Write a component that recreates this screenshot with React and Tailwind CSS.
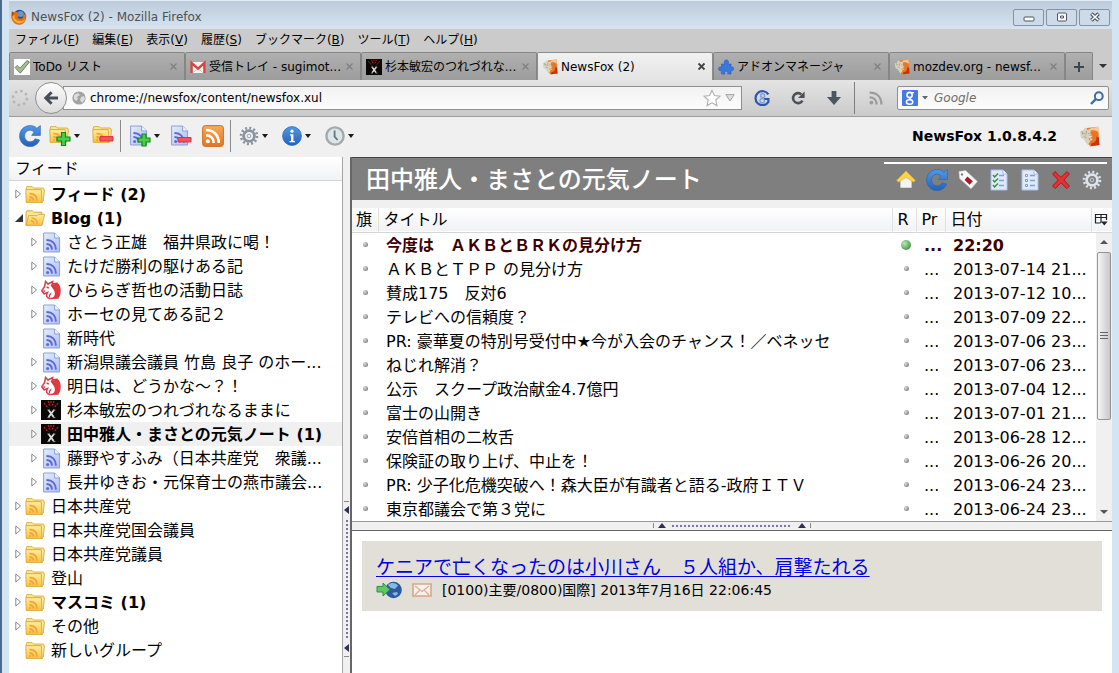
import { useState } from 'react';

const TABS = [
  { id: 'todo', title: 'ToDo リスト', icon: CheckIcon },
  { id: 'mail', title: '受信トレイ - sugimot...', icon: GmailIcon },
  { id: 'blog', title: '杉本敏宏のつれづれな...', icon: XBlogIcon },
  { id: 'newsfox', title: 'NewsFox (2)', icon: NewsFoxIcon },
  { id: 'addons', title: 'アドオンマネージャ', icon: PuzzleIcon },
  { id: 'mozdev', title: 'mozdev.org - newsf...', icon: NewsFoxIcon },
];

const MENUS = [
  ['ファイル', 'F'],
  ['編集', 'E'],
  ['表示', 'V'],
  ['履歴', 'S'],
  ['ブックマーク', 'B'],
  ['ツール', 'T'],
  ['ヘルプ', 'H'],
];

const FEEDS = [
  { name: 'フィード (2)', icon: FolderIcon, twisty: 'closed', bold: true },
  { name: 'Blog (1)', icon: FolderOpenIcon, twisty: 'open', bold: true },
  { name: 'さとう正雄　福井県政に喝！', icon: FeedIcon, twisty: 'closed', child: true },
  { name: 'たけだ勝利の駆けある記', icon: FeedIcon, twisty: 'closed', child: true },
  { name: 'ひららぎ哲也の活動日誌', icon: HorseIcon, twisty: 'closed', child: true },
  { name: 'ホーセの見てある記２', icon: FeedIcon, twisty: 'closed', child: true },
  { name: '新時代', icon: FeedIcon, child: true },
  { name: '新潟県議会議員 竹島 良子 のホー...', icon: FeedIcon, twisty: 'closed', child: true },
  { name: '明日は、どうかな～？！', icon: HorseIcon, twisty: 'closed', child: true },
  { name: '杉本敏宏のつれづれなるままに', icon: XBlogIcon, twisty: 'closed', child: true },
  { name: '田中雅人・まさとの元気ノート (1)', icon: XBlogIcon, twisty: 'closed', child: true, bold: true },
  { name: '藤野やすふみ（日本共産党　衆議...', icon: FeedIcon, twisty: 'closed', child: true },
  { name: '長井ゆきお・元保育士の燕市議会...', icon: FeedIcon, twisty: 'closed', child: true },
  { name: '日本共産党', icon: FolderIcon, twisty: 'closed' },
  { name: '日本共産党国会議員', icon: FolderIcon, twisty: 'closed' },
  { name: '日本共産党議員', icon: FolderIcon, twisty: 'closed' },
  { name: '登山', icon: FolderIcon, twisty: 'closed' },
  { name: 'マスコミ (1)', icon: FolderIcon, twisty: 'closed', bold: true },
  { name: 'その他', icon: FolderIcon, twisty: 'closed' },
  { name: '新しいグループ', icon: FolderIcon },
];

const ARTICLES = [
  { title: '今度は　ＡＫＢとＢＲＫの見分け方', date: '22:20', unread: true },
  { title: 'ＡＫＢとＴＰＰ の見分け方', date: '2013-07-14 21...' },
  { title: '賛成175　反対6', date: '2013-07-12 10...' },
  { title: 'テレビへの信頼度？', date: '2013-07-09 22...' },
  { title: 'PR: 豪華夏の特別号受付中★今が入会のチャンス！／ベネッセ', date: '2013-07-06 23...' },
  { title: 'ねじれ解消？', date: '2013-07-06 23...' },
  { title: '公示　スクープ政治献金4.7億円', date: '2013-07-04 12...' },
  { title: '富士の山開き', date: '2013-07-01 21...' },
  { title: '安倍首相の二枚舌', date: '2013-06-28 12...' },
  { title: '保険証の取り上げ、中止を！', date: '2013-06-26 20...' },
  { title: 'PR: 少子化危機突破へ！森大臣が有識者と語る-政府ＩＴＶ', date: '2013-06-24 23...' },
  { title: '東京都議会で第３党に', date: '2013-06-24 23...' },
];

/* ---------- icons ---------- */

// gradients shared by the icons below
function IconDefs() {
  return (
    <svg className="absolute size-0" aria-hidden="true">
      <defs>
        <linearGradient id="folder" x1="0" y1="0" x2="0" y2="1">
          <stop offset="0" stopColor="#fdeea0" />
          <stop offset="1" stopColor="#f9c23c" />
        </linearGradient>
        <linearGradient id="page" x1="0" y1="0" x2="1" y2="1">
          <stop offset="0" stopColor="#e6edfc" />
          <stop offset="1" stopColor="#a9c0f0" />
        </linearGradient>
        <linearGradient id="blue" x1="0" y1="0" x2="0" y2="1">
          <stop offset="0" stopColor="#4f9ae6" />
          <stop offset="1" stopColor="#2560b4" />
        </linearGradient>
        <linearGradient id="orange" x1="0" y1="0" x2="0" y2="1">
          <stop offset="0" stopColor="#f7a85a" />
          <stop offset="1" stopColor="#e6751a" />
        </linearGradient>
      </defs>
    </svg>
  );
}

function FirefoxIcon() {
  return (
    <svg viewBox="0 0 16 16" className="size-4 shrink-0">
      <circle cx="8.5" cy="7.2" r="6.4" fill="#24508f" />
      <circle cx="9.5" cy="5" r="3" fill="#5b9bd8" />
      <path d="M1 2.2 3.6 3.4C5 2.6 6.6 2.8 7.4 4.4L9 5.2 7 6.8C6.4 9 8.6 10.2 10.8 9.4 12.8 8.4 12.6 5 11.2 3.2 13 3.8 13.8 5.2 14 6.4L14.6 4C17 9.6 13.6 15.8 8 15.8 2.8 15.8-.8 10.2.4 5.4Z" fill="#e2701a" />
      <path d="M1.4 7.5C2 12 5.5 14.6 9 14.3 12 14 14 11.8 14.4 9.4 12.6 12 9.4 12.8 6.4 11.4 4 10.4 3.2 8.4 3.6 5.4Z" fill="#f7b02c" />
      <path d="M.8 2.6 1 7.6 3.4 4.2Z" fill="#b8420d" />
    </svg>
  );
}

function CheckIcon() {
  return (
    <svg viewBox="0 0 16 16" className="size-4 shrink-0">
      <path fill="#fff" d="M0 0h16v16H0z" />
      <path d="M1 8.6 3.2 6.4 6 9.2 13 1.6 15.4 3 6.4 14.2Z" fill="#a3bf90" stroke="#5d6b55" strokeWidth=".8" />
    </svg>
  );
}

function GmailIcon() {
  return (
    <svg viewBox="0 0 16 16" className="size-4 shrink-0">
      <path fill="#f4f4f2" d="M1 3h14v11H1z" />
      <path d="M1.6 14V4L8 9.6 14.4 4v10" fill="none" stroke="#d5483f" strokeWidth="2.4" />
      <path d="m3.4 13.6 3.4-3.4M12.6 13.6l-3.4-3.4" stroke="#ccc" fill="none" />
    </svg>
  );
}

function XBlogIcon() {
  return (
    <svg viewBox="0 0 20 20" className="w-full max-w-5 shrink-0">
      <path fill="#0b0707" d="M0 0h20v20H0z" />
      <path d="m3 3 4 5M7 1l2 5M13 1l-2 5M17 3l-4 5M10 1v3" stroke="#c3211b" strokeWidth="1.2" strokeDasharray="2 1" />
      <path d="m7.6 10 5 7M13 10l-5.4 7" stroke="#ddd" strokeWidth="1.9" />
      <path d="M6.4 10h2.400M12 10h2.400M6.400 17.600h2.400M12 17.600h2.400" stroke="#999" />
    </svg>
  );
}

function NewsFoxIcon() {
  return (
    <svg viewBox="0 0 22 22" className="w-full shrink-0">
      <path d="M8 2 20 .8 21.4 20 12 21.4 7 16Z" fill="#ec7422" />
      <path d="M12 2 20 .8 20.4 7C18 4.400 15 4 12 5Z" fill="#f9c88c" />
      <path d="M13 18c4 0 5.400-3 5.400-7l2.400 1 .6 8-9 1Z" fill="#c4350f" />
      <path d="M1 6 4 5 6 1.600 9 4 12.600 3 12 8 14.600 11 10 13.400 12 16 9 20 5 14 2 12.400Z" fill="#d8d3bd" />
      <path d="M4 7.600h2M9.400 8h1.600M5 11l3 1.400M3 5l1 4M8 5l-1 5" stroke="#aaa48a" strokeWidth="1" fill="none" />
      <path d="m11 10 4 .4-3 2.200 3.400 1-3.400 2" fill="#fbe7c4" stroke="#d9682c" strokeWidth=".6" />
    </svg>
  );
}

function PuzzleIcon() {
  return (
    <svg viewBox="0 0 16 16" className="size-4 shrink-0">
      <path d="M3.5 5H7C5.4 2.8 6.600 1 8.400 1s3 1.800 1.400 4H13v3.200c2-.6 2.600.4 2.600 1.600S15 12 13 11.400V15H9.600c.8-2-.2-2.800-1.400-2.800S6 13 7 15H3.500v-3.600C1.400 12.200.4 11 .4 9.800s1-2.200 3.100-1.600Z" fill="#3c78dc" stroke="#2a5cb4" strokeWidth=".6" />
    </svg>
  );
}

function RefreshIcon() {
  return (
    <svg viewBox="0 0 22 22" className="size-[22px] shrink-0">
      <path d="M10.600.6C14 .4 16.200 1.600 17.800 3.200L21.400.6V10.400H12.600L15 7.200C13.800 5.800 12.400 5.200 11 5.200 7.800 5.200 5.600 7.800 5.600 11S8 16.800 11 16.800C13.400 16.800 15.200 15.600 16 13.800L20.600 15C19 19.200 15.400 21.600 11 21.600 5 21.600.6 17 .6 11 .6 5.200 5 .8 10.600.6Z" fill="url(#blue)" stroke="#2a62b0" strokeWidth=".6" />
    </svg>
  );
}

function FolderArt() {
  return (
    <>
      <path d="M1 4 1.800 1.600h5.400L8.600 3h9.800l1 2-1 11-2 1.600Z" fill="#fbe694" stroke="#d0a232" strokeWidth=".8" />
      <path d="M.8 4.600h15.400l1 12.800H1.200Z" fill="url(#folder)" stroke="#d9a836" strokeWidth=".9" />
      <path d="M4.400 8.600c4.800-.2 7.400 2.600 7.600 7.200M4.400 12c2.600 0 4 1.400 4.200 3.800" fill="none" stroke="#f3a53a" strokeWidth="1.800" />
      <circle cx="5" cy="15" r="1.100" fill="#f3a53a" />
    </>
  );
}

function FolderIcon() {
  return (
    <svg viewBox="0 0 20 19" className="h-[19px] w-5 shrink-0">
      <FolderArt />
    </svg>
  );
}

function FolderOpenIcon() {
  return (
    <svg viewBox="0 0 20 19" className="h-[19px] w-5 shrink-0">
      <path d="M1 3.600 1.800 1.800h5.400L8.600 3.200h8.200V8L2 16.400H1Z" fill="#fbe694" stroke="#d0a232" strokeWidth=".9" />
      <path d="M3.600 6.600h9l1.200-1.200h5.800L17 16.400H1.200Z" fill="url(#folder)" stroke="#d9a836" strokeWidth=".9" />
      <path d="M6.400 9c4 0 6 2.400 5.600 6.200M5.600 11.800c2.400 0 3.400 1.400 3.400 3.400" fill="none" stroke="#f3a53a" strokeWidth="1.500" />
    </svg>
  );
}

function FeedArt() {
  return (
    <>
      <path d="M1.600 1h11l5 5v14h-16Z" fill="url(#page)" stroke="#8ba0d4" />
      <path d="M12.600 1v5h5" fill="#f2f6ff" stroke="#8ba0d4" />
      <path d="M4.400 8c6 0 9.400 4 9.600 9.600M4.400 12c3.400 0 5.400 2.200 5.600 5.600" fill="none" stroke="#6168d8" strokeWidth="1.900" />
      <circle cx="5.600" cy="16.400" r="1.500" fill="#6168d8" />
    </>
  );
}

function FeedIcon() {
  return (
    <svg viewBox="0 0 19 21" className="h-[21px] w-[19px] shrink-0">
      <FeedArt />
    </svg>
  );
}

function HorseIcon() {
  return (
    <svg viewBox="0 0 20 20" className="size-5 shrink-0">
      <path d="M4.600 1.400 7 4 11.600 1.600 11.400 4 16 3.400c2.600 2.400 3.600 7 2.400 11.600l-1.600 3-8.200.6C6 18 4.600 15.600 6.400 12.600L3 13.800.8 10.800 3.600 6.400Z" fill="#fff" stroke="#dc3b41" strokeWidth="1.500" />
      <path d="M9.600 5.400 11.600 2.400 12 4.400 16 3.600c2.600 2.400 3.600 7 2.400 11.400l-1.600 3h-5c2.600-2.400 2.600-5.400 1-8Z" fill="#dc3b41" />
      <path d="m5.600 7 2.200 1M2.400 11h1.800M8.400 17.400c-.6-2 .4-3 1.600-4.200" fill="none" stroke="#dc3b41" strokeWidth="1.400" />
    </svg>
  );
}

function FolderAddIcon() {
  return (
    <svg viewBox="0 0 22 22" className="size-[22px]">
      <FolderArt />
      <path d="M12.500 7.500h4v4.500h4.500v4h-4.500v4.500h-4V16H8v-4h4.500Z" fill="#49d04a" stroke="#12861b" strokeWidth="1.200" />
    </svg>
  );
}

function FolderRemoveIcon() {
  return (
    <svg viewBox="0 0 22 22" className="size-[22px]">
      <FolderArt />
      <path d="M8 11.600h13v4.400H8Z" fill="#f2565a" stroke="#dd3038" />
    </svg>
  );
}

function FeedAddIcon() {
  return (
    <svg viewBox="0 0 22 22" className="size-[22px]">
      <FeedArt />
      <path d="M13 9h4v4h4v4h-4v4h-4v-4H9v-4h4Z" fill="#49d04a" stroke="#12861b" strokeWidth="1.200" />
    </svg>
  );
}

function FeedRemoveIcon() {
  return (
    <svg viewBox="0 0 22 22" className="size-[22px]">
      <FeedArt />
      <path d="M8 12.500h13v4.400H8Z" fill="#f2565a" stroke="#dd3038" />
    </svg>
  );
}

function RssIcon() {
  return (
    <svg viewBox="0 0 22 22" className="size-[22px]">
      <rect x=".6" y=".6" width="20.800" height="20.800" rx="2.600" fill="url(#orange)" stroke="#cf7226" />
      <path d="M4 5c7.600 0 12.600 5 12.800 13M4 10.200c4.600 0 7.600 3 7.800 7.800" fill="none" stroke="#fff" strokeWidth="2.600" />
      <circle cx="5.800" cy="16.200" r="2" fill="#fff" />
    </svg>
  );
}

function GearIcon({ color, center }) {
  return (
    <svg viewBox="0 0 20 20" className="size-5">
      <circle cx="10" cy="10" r="8" fill="none" stroke={color} strokeWidth="2.600" strokeDasharray="2 2.189" />
      <circle cx="10" cy="10" r="5.400" fill="none" stroke={color} strokeWidth="2.800" />
      <circle cx="10" cy="10" r="3" fill={center} />
      <circle cx="10" cy="10" r="1.800" fill="none" stroke={color} strokeWidth=".8" />
    </svg>
  );
}

function InfoIcon() {
  return (
    <svg viewBox="0 0 20 20" className="size-5">
      <circle cx="10" cy="10" r="9.400" fill="url(#blue)" stroke="#2a6cc0" strokeWidth=".8" />
      <path d="M8 8.200h3.400V15H13v1.200H7.400V15H9V9.400H8Z" fill="#fff" />
      <circle cx="10" cy="5.200" r="1.600" fill="#fff" />
    </svg>
  );
}

function ClockIcon() {
  return (
    <svg viewBox="0 0 20 20" className="size-5">
      <circle cx="10" cy="10" r="8.600" fill="#dce6e8" stroke="#a3aaac" strokeWidth="2.400" />
      <path d="M9.600 4.600v6l3 3.400" fill="none" stroke="#6a747c" strokeWidth="1.800" />
    </svg>
  );
}

function HomeIcon() {
  return (
    <svg viewBox="0 0 20 20" className="size-5">
      <path d="M4.400 10 10 5.600l5.600 4.400v7.800H4.400Z" fill="#f5f5f5" />
      <path d="M10 1 19.400 10.400 17.400 12 10 7.600 2.600 12 .6 10.400Z" fill="#fbd34a" stroke="#e0b02c" strokeWidth=".6" />
    </svg>
  );
}

function TagIcon() {
  return (
    <svg viewBox="0 0 20 20" className="size-5">
      <path d="M1 1.600 7.600.6 19.400 11.600 13 18.800 1.600 8.400Z" fill="#fafafa" stroke="#ccc" strokeWidth=".6" />
      <path d="m9.400 6.400 5.400 4.800-3.200 3.600-5-4.800Z" fill="#b3161d" />
      <circle cx="4" cy="4.400" r="1.200" fill="#7f7f7f" />
    </svg>
  );
}

function ListIcon({ checked }) {
  return (
    <svg viewBox="0 0 18 22" className="h-[22px] w-[18px]">
      <path d="M1 1h12l4 4v16H1Z" fill="#dfe9fa" stroke="#a9c0e8" />
      <path d="M13 1v4h4" fill="#fff" stroke="#9db7e2" />
      <path d="M9 6.500h5M9 11.500h5M9 16.500h5" stroke="#7ba2e0" strokeWidth="1.400" />
      {checked ? (
        <path d="m3 6 1.600 2L8 4.400M3 11l1.600 2L8 9.400M3 16l1.600 2L8 14.400" fill="none" stroke="#2e9140" strokeWidth="1.400" />
      ) : (
        <path d="M4.500 5.500h2v2h-2zM4.500 10.500h2v2h-2zM4.500 15.500h2v2h-2z" fill="#fff" stroke="#7ba2e0" />
      )}
    </svg>
  );
}

function DeleteIcon() {
  return (
    <svg viewBox="0 0 20 20" className="size-5">
      <path d="M4 1.600 10 7.400 16 1.600 18.400 4 12.800 10l5.600 6-2.600 2.600L10 12.800l-5.800 5.800L1.600 16 7.200 10 1.600 4Z" fill="#e53035" stroke="#b31218" />
    </svg>
  );
}

function Caret() {
  return (
    <svg viewBox="0 0 6 4" className="h-1 w-1.5 shrink-0">
      <path d="M0 0h6L3 4Z" fill="#1a1a1a" />
    </svg>
  );
}

/* ---------- window parts ---------- */

function TitleBar() {
  const button = 'flex h-[17px] w-[31px] items-center justify-center rounded-xs border border-[#8292a8] bg-[#cddbe9]';
  return (
    <header className="flex h-[29px] items-center gap-1 border-t border-[#e3edf6] bg-linear-to-b from-[#bccbdb] to-[#d7e3ef] pt-1 pr-0.5 pl-0.5">
      <FirefoxIcon />
      <h1 className="flex-1 truncate text-xs text-[#4d5157]">NewsFox (2) - Mozilla Firefox</h1>
      <div className="flex gap-0.5">
        <button className={button} aria-label="最小化">
          <svg viewBox="0 0 12 10" className="h-2.5 w-3"><rect x="1" y="5" width="10" height="4" rx="1" fill="#fff" stroke="#4b5565" /></svg>
        </button>
        <button className={button} aria-label="元に戻す">
          <svg viewBox="0 0 12 10" className="h-2.5 w-3"><rect x="1.500" y="1" width="9" height="8" rx="1" fill="#fff" stroke="#4b5565" /><path d="M4.500 4h3v2h-3z" fill="#fff" stroke="#4b5565" /></svg>
        </button>
        <button className={button} aria-label="閉じる">
          <svg viewBox="0 0 12 10" className="h-2.5 w-3"><path d="m2.400 1.600 7.200 6.800M9.600 1.600 2.400 8.400" stroke="#4b5565" strokeWidth="3.600" /><path d="m2.800 2 6.400 6M9.200 2 2.800 8" stroke="#fff" strokeWidth="1.600" /></svg>
        </button>
      </div>
    </header>
  );
}

function MenuBar() {
  return (
    <nav className="flex h-[23px] items-center gap-px bg-[#cbcbcb] pb-0.5 text-xs">
      {MENUS.map(([label, key]) => (
        <button key={key} className="px-1.5">
          {label}(<span className="underline underline-offset-1">{key}</span>)
        </button>
      ))}
    </nav>
  );
}

function TabBar() {
  const [active, setActive] = useState('newsfox');
  return (
    <div className="flex h-7 bg-[#cbcbcb] text-xs">
      {TABS.map(({ id, title, icon: Icon }) => (
        <div
          key={id}
          className={`flex min-w-0 flex-1 items-center rounded-t-xs border border-b-0 pr-1.5 pl-1 ${
            active === id
              ? 'border-[#8c8c8c] bg-linear-to-b from-[#f1f1f1] to-[#e4e4e4]'
              : 'border-[#868686] bg-linear-to-b from-[#b0b0b0] to-[#9c9c9c]'
          }`}
        >
          <button onClick={() => setActive(id)} className="flex min-w-0 flex-1 items-center gap-[3px] text-left">
            <span className="flex w-4 shrink-0"><Icon /></span>
            <span className="truncate">{title}</span>
          </button>
          <button aria-label="タブを閉じる" className="shrink-0">
            <svg viewBox="0 0 9 9" className="size-[9px]">
              <path d="m1.500 1.500 6 6M7.500 1.500l-6 6" stroke={active === id ? '#444' : '#808080'} strokeWidth={active === id ? 1.8 : 1.3} />
            </svg>
          </button>
        </div>
      ))}
      <button aria-label="新しいタブ" className="flex w-7 items-center justify-center rounded-t-xs border border-b-0 border-[#868686] bg-linear-to-b from-[#b0b0b0] to-[#9c9c9c]">
        <svg viewBox="0 0 10 10" className="size-2.5"><path d="M5 0v10M0 5h10" stroke="#3a4650" strokeWidth="2" /></svg>
      </button>
      <button aria-label="タブの一覧" className="flex w-[19px] items-center justify-center">
        <svg viewBox="0 0 8 4" className="h-1 w-2"><path d="M0 0h8L4 4Z" fill="#333" /></svg>
      </button>
    </div>
  );
}

function NavBar() {
  const [url, setUrl] = useState('chrome://newsfox/content/newsfox.xul');
  const [query, setQuery] = useState('');
  const button = 'flex w-9 items-center justify-center';
  return (
    <div className="flex h-[37px] items-center border-b border-[#9d9d9d] bg-linear-to-b from-[#e4e4e4] to-[#cacaca] pr-[3px] text-xs">
      <svg viewBox="0 0 18 18" className="mx-0.5 size-[18px] shrink-0">
        <circle cx="9" cy="9" r="7" fill="none" stroke="#b4b4b4" strokeWidth="2.400" strokeDasharray="2.400 3.098" />
      </svg>
      <button aria-label="戻る" className="z-10 ml-1 flex size-8 shrink-0 items-center justify-center rounded-full border border-[#8f8f8f] bg-linear-to-b from-[#fcfcfc] to-[#dcdcdc]">
        <svg viewBox="0 0 16 14" className="h-3.5 w-4"><path d="M15 7H3M8.600 1.200 2.800 7l5.800 5.800" fill="none" stroke="#46505a" strokeWidth="3" /></svg>
      </button>
      <div className="-ml-1 flex h-6 flex-1 items-center border border-[#8f8f8f] bg-linear-to-b from-[#f2f2f2] to-[#fdfdfd] pr-1.5 pl-2">
        <svg viewBox="0 0 14 14" className="size-3.5 shrink-0">
          <circle cx="7" cy="7" r="6.600" fill="#a2a2a2" />
          <path d="m2 4 4-2 2 2-3 2 1 2-2 2-2-2ZM9 6l3-1 1 3-3 4-2-3Z" fill="#dcdcdc" />
        </svg>
        <input aria-label="URL" value={url} onChange={(e) => setUrl(e.target.value)} className="min-w-0 flex-1 bg-transparent pl-1 outline-none" />
        <button aria-label="ブックマークに追加" className="mr-1">
          <svg viewBox="0 0 18 18" className="size-[18px]"><path d="m9 1.400 2.400 5.200 5.600.6-4.200 3.800 1.200 5.600L9 13.800l-5 2.800L5.200 11 1 7.200l5.600-.6Z" fill="#fff" stroke="#b0b0b0" strokeWidth="1.100" /></svg>
        </button>
        <button aria-label="履歴を表示">
          <svg viewBox="0 0 10 8" className="h-2 w-2.5"><path d="M.8.600h8.400L5 7Z" fill="#ddd" stroke="#a3a3a3" /></svg>
        </button>
      </div>
      <div className="ml-0.5 flex">
        <button aria-label="Google ツール" className={button}>
          <svg viewBox="0 0 16 16" className="size-4">
            <path d="M14.400 4.400A7 7 0 1 0 14.400 12V9H10" fill="none" stroke="#2b58ad" strokeWidth="2.200" />
            <circle cx="8.600" cy="5.800" r="2" fill="none" stroke="#7ba0dc" strokeWidth="1.400" />
            <circle cx="8.200" cy="10.800" r="2.200" fill="none" stroke="#7ba0dc" strokeWidth="1.400" />
          </svg>
        </button>
        <button aria-label="再読み込み" className={button}>
          <svg viewBox="0 0 14 14" className="size-3.5">
            <path d="M11.400 9.600A5 5 0 1 1 10.400 3.400" fill="none" stroke="#4a5259" strokeWidth="2.600" />
            <path d="M13.600.4V7H7Z" fill="#4a5259" />
          </svg>
        </button>
        <button aria-label="ダウンロード" className={button}>
          <svg viewBox="0 0 14 14" className="size-3.5"><path d="M4.600 0h4.800v6H14l-7 8-7-8h4.600Z" fill="#4a5763" /></svg>
        </button>
      </div>
      <div className="ml-0.5 h-8 border-l border-[#7e7e7e]" />
      <button aria-label="フィードを購読" className="flex w-[42px] items-center justify-center">
        <svg viewBox="0 0 14 14" className="size-3.5">
          <path d="M.6 1.600C8 1.600 12.400 6 12.400 13.400M.6 6.400c4.200 0 7 2.800 7 7" fill="none" stroke="#9b9b9b" strokeWidth="2.200" />
          <circle cx="2.400" cy="11.600" r="1.900" fill="#9b9b9b" />
        </svg>
      </button>
      <div className="flex h-6 w-[212px] items-center rounded-xs border border-[#8f8f8f] bg-linear-to-b from-[#f2f2f2] to-[#fdfdfd] px-1">
        <button aria-label="検索エンジン" className="flex items-center gap-1">
          <svg viewBox="0 0 16 16" className="size-4">
            <rect width="16" height="16" rx="1" fill="#4479ea" />
            <circle cx="7.600" cy="5" r="2.600" fill="none" stroke="#fff" strokeWidth="1.600" />
            <path d="M9.600 2.600H12M8.400 7.600c-2 1 1 1.600 1 3" stroke="#fff" fill="none" strokeWidth="1.300" />
            <ellipse cx="7.600" cy="12" rx="3.200" ry="2.200" fill="none" stroke="#fff" strokeWidth="1.500" />
          </svg>
          <svg viewBox="0 0 6 4" className="h-1 w-1.5"><path d="M0 0h6L3 3.600Z" fill="#666" /></svg>
        </button>
        <input aria-label="検索" placeholder="Google" value={query} onChange={(e) => setQuery(e.target.value)} className="min-w-0 flex-1 bg-transparent pl-1.5 outline-none placeholder:text-[#6e6e6e] placeholder:italic" />
        <button aria-label="検索する">
          <svg viewBox="0 0 14 14" className="size-3.5">
            <circle cx="8.800" cy="5.200" r="3.900" fill="#f4f8fd" stroke="#3d6ca6" strokeWidth="2" />
            <path d="M5.800 8.200 1 13" stroke="#3d6ca6" strokeWidth="2.400" />
          </svg>
        </button>
      </div>
    </div>
  );
}

function ToolButton({ label, menu, children }) {
  return (
    <button aria-label={label} className="flex items-center gap-[3px]">
      {children}
      {menu && <Caret />}
    </button>
  );
}

function Toolbar() {
  return (
    <div className="flex h-10 items-center bg-[#f0f0f0] pr-3 pb-0.5 pl-2.5">
      <ToolButton label="更新"><RefreshIcon /></ToolButton>
      <div className="ml-2 flex gap-3">
        <ToolButton label="グループを追加" menu><FolderAddIcon /></ToolButton>
        <ToolButton label="グループを削除"><FolderRemoveIcon /></ToolButton>
      </div>
      <div className="mr-2 ml-1.5 h-8 border-l border-[#8a8a8a]" />
      <div className="flex gap-2.5">
        <ToolButton label="フィードを追加" menu><FeedAddIcon /></ToolButton>
        <ToolButton label="フィードを削除"><FeedRemoveIcon /></ToolButton>
        <ToolButton label="フィードを検索"><RssIcon /></ToolButton>
      </div>
      <div className="mr-2 ml-1.5 h-8 border-l border-[#8a8a8a]" />
      <div className="flex gap-3.5">
        <ToolButton label="設定" menu><GearIcon color="#8a939f" center="#f0f0f0" /></ToolButton>
        <ToolButton label="情報" menu><InfoIcon /></ToolButton>
        <ToolButton label="履歴" menu><ClockIcon /></ToolButton>
      </div>
      <strong className="ml-auto pr-[22px] text-sm">NewsFox 1.0.8.4.2</strong>
      <span className="flex w-[21px]"><NewsFoxIcon /></span>
    </div>
  );
}

function Twisty({ state }) {
  return (
    <svg viewBox="0 0 8 10" className="h-2.5 w-2 shrink-0">
      {state === 'closed' && <path d="M.8 1v8L5.600 5Z" fill="#fff" stroke="#8a8a8a" />}
      {state === 'open' && <path d="M8 1v8H0Z" fill="#333" />}
    </svg>
  );
}

function FeedTree() {
  const [selected, setSelected] = useState(10);
  return (
    <aside className="flex w-[333px] shrink-0 flex-col bg-white text-base">
      <h2 className="h-6 border-b border-[#d5d5d5] bg-linear-to-b from-white to-[#f1f2f4] pl-1.5 leading-6">フィード</h2>
      <ul className="pt-px">
        {FEEDS.map(({ name, icon: Icon, twisty, child, bold }, i) => (
          <li key={name}>
            <button
              onClick={() => setSelected(i)}
              className={`flex h-6 w-full items-center gap-0.5 text-left ${child ? 'pl-[22px]' : 'pl-1.5'} ${bold ? 'font-bold' : ''} ${selected === i ? 'bg-[#f0f0f0]' : ''}`}
            >
              <Twisty state={twisty} />
              <span className="flex w-5 shrink-0 justify-center"><Icon /></span>
              <span className="truncate pt-0.5 pl-1 leading-[22px]">{name}</span>
            </button>
          </li>
        ))}
      </ul>
    </aside>
  );
}

function VerticalSplitter() {
  return (
    <div role="separator" aria-orientation="vertical" className="flex w-2.5 shrink-0 flex-col items-center justify-end border-r-2 border-l border-r-[#666] border-l-[#a5a5a5] bg-[#f0f0f0] pb-4">
      <div className="flex flex-col items-center gap-1.5 border-y border-[#888] py-1">
        <svg viewBox="0 0 5 8" className="h-2 w-[5px]"><path d="M5 0v8L0 4Z" fill="#2e2e58" /></svg>
        <div className="h-[118px] w-0.5 bg-[repeating-linear-gradient(to_bottom,#7777a0_0_2px,transparent_2px_4px)]" />
        <svg viewBox="0 0 5 8" className="h-2 w-[5px]"><path d="M5 0v8L0 4Z" fill="#2e2e58" /></svg>
      </div>
    </div>
  );
}

function HorizontalSplitter() {
  return (
    <div role="separator" className="flex h-2.5 items-center justify-center border-t border-b border-t-[#999] border-b-[#666] bg-[#f0f0f0]">
      <div className="flex items-center gap-1.5 border-x border-[#888] px-1">
        <svg viewBox="0 0 8 5" className="h-[5px] w-2"><path d="M0 5h8L4 0Z" fill="#2e2e58" /></svg>
        <div className="h-0.5 w-[120px] bg-[repeating-linear-gradient(to_right,#7777a0_0_2px,transparent_2px_4px)]" />
        <svg viewBox="0 0 8 5" className="h-[5px] w-2"><path d="M0 5h8L4 0Z" fill="#2e2e58" /></svg>
      </div>
    </div>
  );
}

function FeedHeader() {
  const button = 'flex w-[31px] items-center justify-center';
  return (
    <div className="flex h-[43px] items-start border-t border-[#444] bg-[#7f7f7f]">
      <h2 className="min-w-0 flex-1 self-center truncate pt-0.5 pl-3.5 text-2xl font-medium text-white">田中雅人・まさとの元気ノート</h2>
      <div className="mt-1 mr-[5px] flex h-[34px] border-t-2 border-white pl-1.5">
        <button aria-label="ホーム" className={button}><HomeIcon /></button>
        <button aria-label="更新" className={button}><RefreshIcon /></button>
        <button aria-label="タグ" className={button}><TagIcon /></button>
        <button aria-label="すべて既読にする" className={button}><ListIcon checked /></button>
        <button aria-label="すべて未読にする" className={button}><ListIcon /></button>
        <button aria-label="削除" className={button}><DeleteIcon /></button>
        <button aria-label="設定" className={button}><GearIcon color="#dbe3ec" center="#7f7f7f" /></button>
      </div>
    </div>
  );
}

function Dot({ unread }) {
  return unread ? (
    <span className="mx-auto block size-2.5 rounded-full bg-radial-[at_35%_35%] from-[#b9eab4] to-[#1f7a26]" />
  ) : (
    <span className="mx-auto block size-[5px] rounded-full bg-radial-[at_35%_35%] from-[#ddd] to-[#666]" />
  );
}

function ScrollBar() {
  return (
    <div className="ml-auto flex h-72 w-4 flex-col items-center bg-[#f0f0f0]">
      <button aria-label="上へ" className="flex h-[19px] items-center"><svg viewBox="0 0 8 4" className="h-1 w-2"><path d="M0 4h8L4 0Z" fill="#555" /></svg></button>
      <div className="flex h-[168px] w-3.5 flex-col items-center justify-center gap-0.5 rounded-xs border border-[#959595] bg-linear-to-r from-[#f5f5f5] to-[#c8c8cc]">
        <span className="h-px w-2 bg-[#666]" />
        <span className="h-px w-2 bg-[#666]" />
        <span className="h-px w-2 bg-[#666]" />
      </div>
      <button aria-label="下へ" className="mt-auto flex h-[17px] items-center"><svg viewBox="0 0 8 4" className="h-1 w-2"><path d="M0 0h8L4 4Z" fill="#555" /></svg></button>
    </div>
  );
}

function ArticleTable() {
  const head = 'border-r border-[#e0e0e0] p-0 font-normal';
  return (
    <table className="w-full table-fixed border-collapse bg-white text-left text-base">
      <colgroup>
        <col className="w-[26px]" />
        <col />
        <col className="w-6" />
        <col className="w-[29px]" />
        <col className="w-[146px]" />
        <col className="w-[21px]" />
      </colgroup>
      <thead>
        <tr className="h-6 border-b border-[#d5d5d5] bg-linear-to-b from-white to-[#f1f2f4] leading-[22px]">
          <th className={`${head} pl-1`}>旗</th>
          <th className={`${head} pl-[5px]`}>タイトル</th>
          <th className={`${head} pl-[5px]`}>R</th>
          <th className={`${head} pl-[5px]`}>Pr</th>
          <th className={`${head} pl-[5px]`}>日付</th>
          <th className="p-0">
            <button aria-label="列の選択" className="ml-0.5 flex items-center">
              <svg viewBox="0 0 14 13" className="h-[13px] w-3.5">
                <path d="M1.500 1.500h11V7M1.500 1v9h5M1 4.500h12M7 1v9" fill="none" stroke="#222" strokeWidth="1.200" />
                <path d="M7 8.500h6.600L10.300 12.500Z" fill="#222" />
              </svg>
            </button>
          </th>
        </tr>
      </thead>
      <tbody>
        {ARTICLES.map(({ title, date, unread }, i) => (
          <tr key={i} className={`h-6 leading-[22px] ${unread ? 'font-bold text-[#3d0000]' : ''}`}>
            <td className="p-0"><Dot /></td>
            <td className="truncate p-0 pt-0.5 pl-2">{title}</td>
            <td className="p-0 pl-1"><Dot unread={unread} /></td>
            <td className="p-0 pt-0.5 pl-2">...</td>
            <td className="overflow-hidden p-0 pt-0.5 pl-2 whitespace-nowrap">{date}</td>
            {i === 0 && <td rowSpan={ARTICLES.length} className="p-0 align-top"><ScrollBar /></td>}
          </tr>
        ))}
      </tbody>
    </table>
  );
}

function ArticleView() {
  return (
    <article className="mx-2.5 mt-2.5 bg-[#e2dfd8] px-3.5 pt-3 pb-3">
      <h3 className="text-[19px] leading-7">
        <a href="#article" className="text-[#0000e0] underline underline-offset-2">ケニアで亡くなったのは小川さん　５人組か、肩撃たれる</a>
      </h3>
      <div className="flex h-[18px] items-center text-sm">
        <svg viewBox="0 0 26 18" className="h-[18px] w-[26px]">
          <circle cx="17.500" cy="9" r="8.300" fill="#2c5a9c" />
          <path d="M12 4c3-3 8-2.400 10 .6l-3 3.400-4-1ZM16 12l5-1 1 2-3 2Z" fill="#86b8e6" />
          <path d="M1 5.400h6V2l7 6.600-7 6.400v-4H1Z" fill="#5cc866" stroke="#2c9144" />
        </svg>
        <svg viewBox="0 0 20 14" className="ml-2.5 h-3.5 w-5">
          <path d="M1 1h18v12H1Z" fill="#fbf1ea" stroke="#d8a68a" strokeWidth="1.600" />
          <path d="m3 3 7 5.400L17 3M3 12l4.600-4.600M17 12l-4.600-4.600" fill="none" stroke="#dbac94" strokeWidth="1.200" />
        </svg>
        <p className="pl-2.5">[0100)主要/0800)国際] 2013年7月16日 22:06:45</p>
      </div>
    </article>
  );
}

export default function App() {
  return (
    <div className="flex min-h-screen flex-col border-l-2 border-[#4b6c90] bg-[#d5e4f1] pr-[7px] pl-[7px] font-['DejaVu_Sans','Noto_Sans_CJK_JP',sans-serif] text-black">
      <IconDefs />
      <TitleBar />
      <MenuBar />
      <TabBar />
      <NavBar />
      <Toolbar />
      <div className="flex flex-1">
        <FeedTree />
        <VerticalSplitter />
        <main className="flex min-w-0 flex-1 flex-col bg-white">
          <FeedHeader />
          <div className="h-2 bg-[#f0f0f0]" />
          <ArticleTable />
          <HorizontalSplitter />
          <ArticleView />
        </main>
      </div>
    </div>
  );
}
